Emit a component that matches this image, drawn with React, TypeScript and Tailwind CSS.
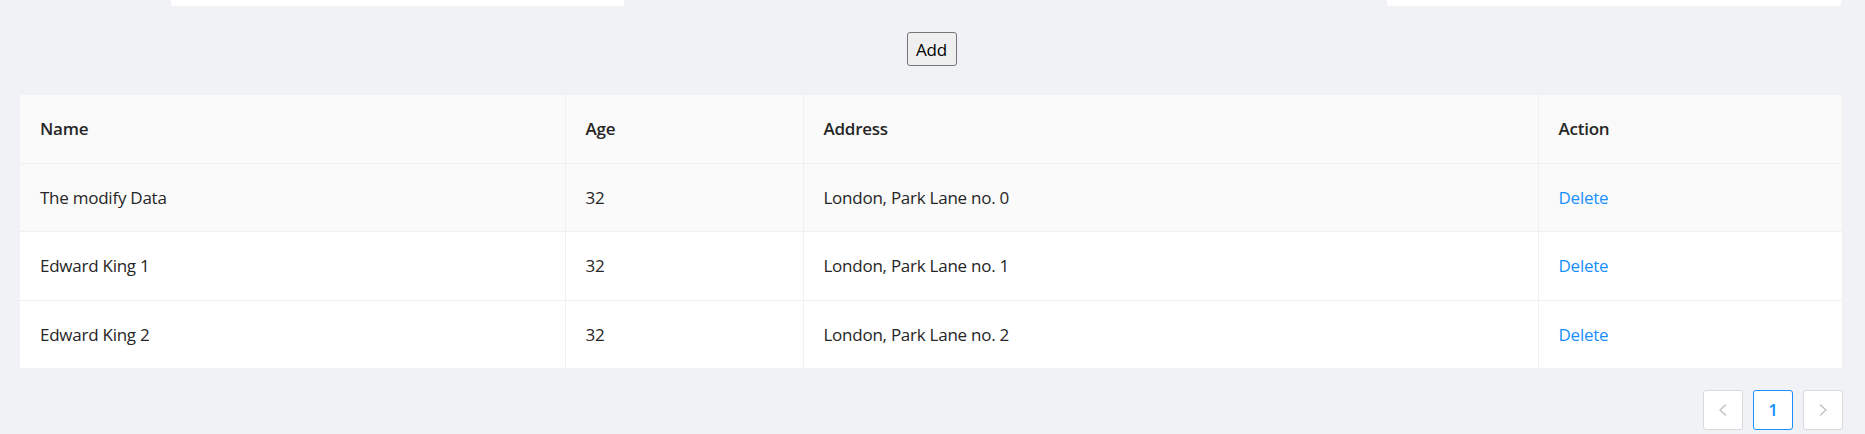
type Row = {
  key: string
  name: string
  age: number
  address: string
}

const rows: Row[] = [
  { key: "0", name: "The modify Data", age: 32, address: "London, Park Lane no. 0" },
  { key: "1", name: "Edward King 1", age: 32, address: "London, Park Lane no. 1" },
  { key: "2", name: "Edward King 2", age: 32, address: "London, Park Lane no. 2" },
]

const cell = "px-[20px] py-[20px] leading-[27.5px] border-b border-r border-[#f0f0f0] text-left"

function Chevron({ dir }: { dir: "left" | "right" }) {
  return (
    <svg width="10" height="14" viewBox="0 0 10 14" fill="none">
      {dir === "left" ? (
        <polyline points="8,1.5 2,7 8,12.5" stroke="#bfbfbf" strokeWidth="1.3" />
      ) : (
        <polyline points="2,1.5 8,7 2,12.5" stroke="#bfbfbf" strokeWidth="1.3" />
      )}
    </svg>
  )
}

export default function App() {
  return (
    <div
      className="min-h-screen bg-[#f0f2f5] text-[17px] tracking-[-0.25px] text-[#262626]"
      style={{ fontFamily: '"Open Sans", "Noto Sans", sans-serif' }}
    >
      <div className="ml-[20px] w-[1823px]">
        {/* inputs scrolled off the top */}
        <div className="flex h-[6px]">
          <div className="ml-[151px] w-[453px] bg-white rounded-b-[2px]" />
          <div className="ml-auto mr-[2px] w-[454px] bg-white rounded-b-[2px]" />
        </div>

        <div className="mt-[26px] flex justify-center">
          <button className="w-[50px] h-[34px] border border-[#767676] bg-[#efefef] rounded-[3px] text-[17px] text-black leading-none">
            Add
          </button>
        </div>

        <div className="mt-[29px] bg-white">
          <table className="w-full border-collapse table-fixed">
            <colgroup>
              <col className="w-[545px]" />
              <col className="w-[238px]" />
              <col className="w-[735px]" />
              <col />
            </colgroup>
            <thead>
              <tr className="bg-[#fafafa]">
                <th className={`${cell} font-semibold`}>Name</th>
                <th className={`${cell} font-semibold`}>Age</th>
                <th className={`${cell} font-semibold`}>Address</th>
                <th className={`${cell} font-semibold`}>Action</th>
              </tr>
            </thead>
            <tbody>
              {rows.map((r, i) => (
                <tr key={r.key} className={i === 0 ? "bg-[#fafafa]" : "bg-white"}>
                  <td className={cell}>{r.name}</td>
                  <td className={cell}>{r.age}</td>
                  <td className={cell}>{r.address}</td>
                  <td className={cell}>
                    <a className="text-[#1890ff] cursor-pointer">Delete</a>
                  </td>
                </tr>
              ))}
            </tbody>
          </table>
        </div>

        <div className="mt-[21px] flex justify-end gap-[10px]">
          <button className="w-[40px] h-[40px] flex items-center justify-center border border-[#d9d9d9] bg-white rounded-[3px]">
            <Chevron dir="left" />
          </button>
          <button className="w-[40px] h-[40px] flex items-center justify-center border border-[#1890ff] bg-white rounded-[3px] text-[#1890ff] font-semibold">
            1
          </button>
          <button className="w-[40px] h-[40px] flex items-center justify-center border border-[#d9d9d9] bg-white rounded-[3px]">
            <Chevron dir="right" />
          </button>
        </div>
      </div>
    </div>
  )
}
